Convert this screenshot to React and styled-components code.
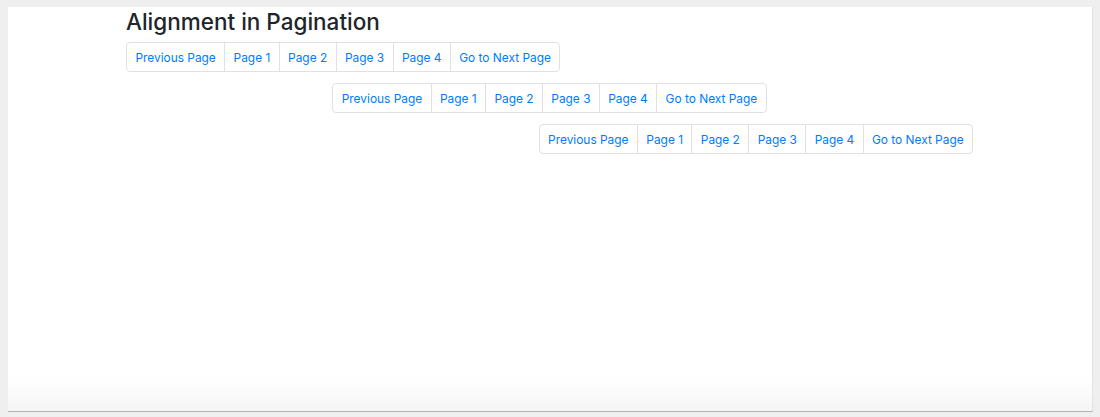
import React from "react";
import styled, { createGlobalStyle } from "styled-components";

const Global = createGlobalStyle`
  html, body { margin: 0; padding: 0; background: #efefef; }
  body { font-family: Inter, "Liberation Sans", Arial, sans-serif; }
  * { box-sizing: border-box; }
`;

const Frame = styled.div`
  padding: 7px 7px 5px 8px;
`;

const Panel = styled.div`
  background: #fff;
  height: 405px;
  border-right: 1px solid #e2e2e2;
  border-bottom: 1px solid #b3b3b3;
  box-shadow: inset 0 -40px 30px -28px rgba(0, 0, 0, 0.05);
`;

const Container = styled.div`
  width: 847px;
  margin-left: 118px;
  display: flex;
  flex-direction: column;
  gap: 11px;
`;

const Title = styled.h2`
  margin: 0 0 -5px;
  font-size: 22.5px;
  font-weight: 500;
  line-height: 29px;
  color: #212529;
`;

const Row = styled.nav`
  display: flex;
  justify-content: ${(p) => p.$align};
`;

const List = styled.ul`
  display: flex;
  list-style: none;
  margin: 0;
  padding: 0;
  border-radius: 4px;
`;

const Item = styled.li`
  height: 30px;
  padding: 0 8.4px;
  display: flex;
  align-items: center;
  font-size: 11.9px;
  color: #007bff;
  border: 1px solid #dee2e6;
  margin-left: -1px;
  &:first-child {
    margin-left: 0;
    border-radius: 4px 0 0 4px;
  }
  &:last-child {
    border-radius: 0 4px 4px 0;
  }
`;

const labels = ["Previous Page", "Page 1", "Page 2", "Page 3", "Page 4", "Go to Next Page"];

function Pagination({ align }) {
  return (
    <Row $align={align}>
      <List>
        {labels.map((l) => (
          <Item key={l}>{l}</Item>
        ))}
      </List>
    </Row>
  );
}

export default function App() {
  return (
    <>
      <Global />
      <Frame>
        <Panel>
          <Container>
            <Title>Alignment in Pagination</Title>
            <Pagination align="flex-start" />
            <Pagination align="center" />
            <Pagination align="flex-end" />
          </Container>
        </Panel>
      </Frame>
    </>
  );
}
